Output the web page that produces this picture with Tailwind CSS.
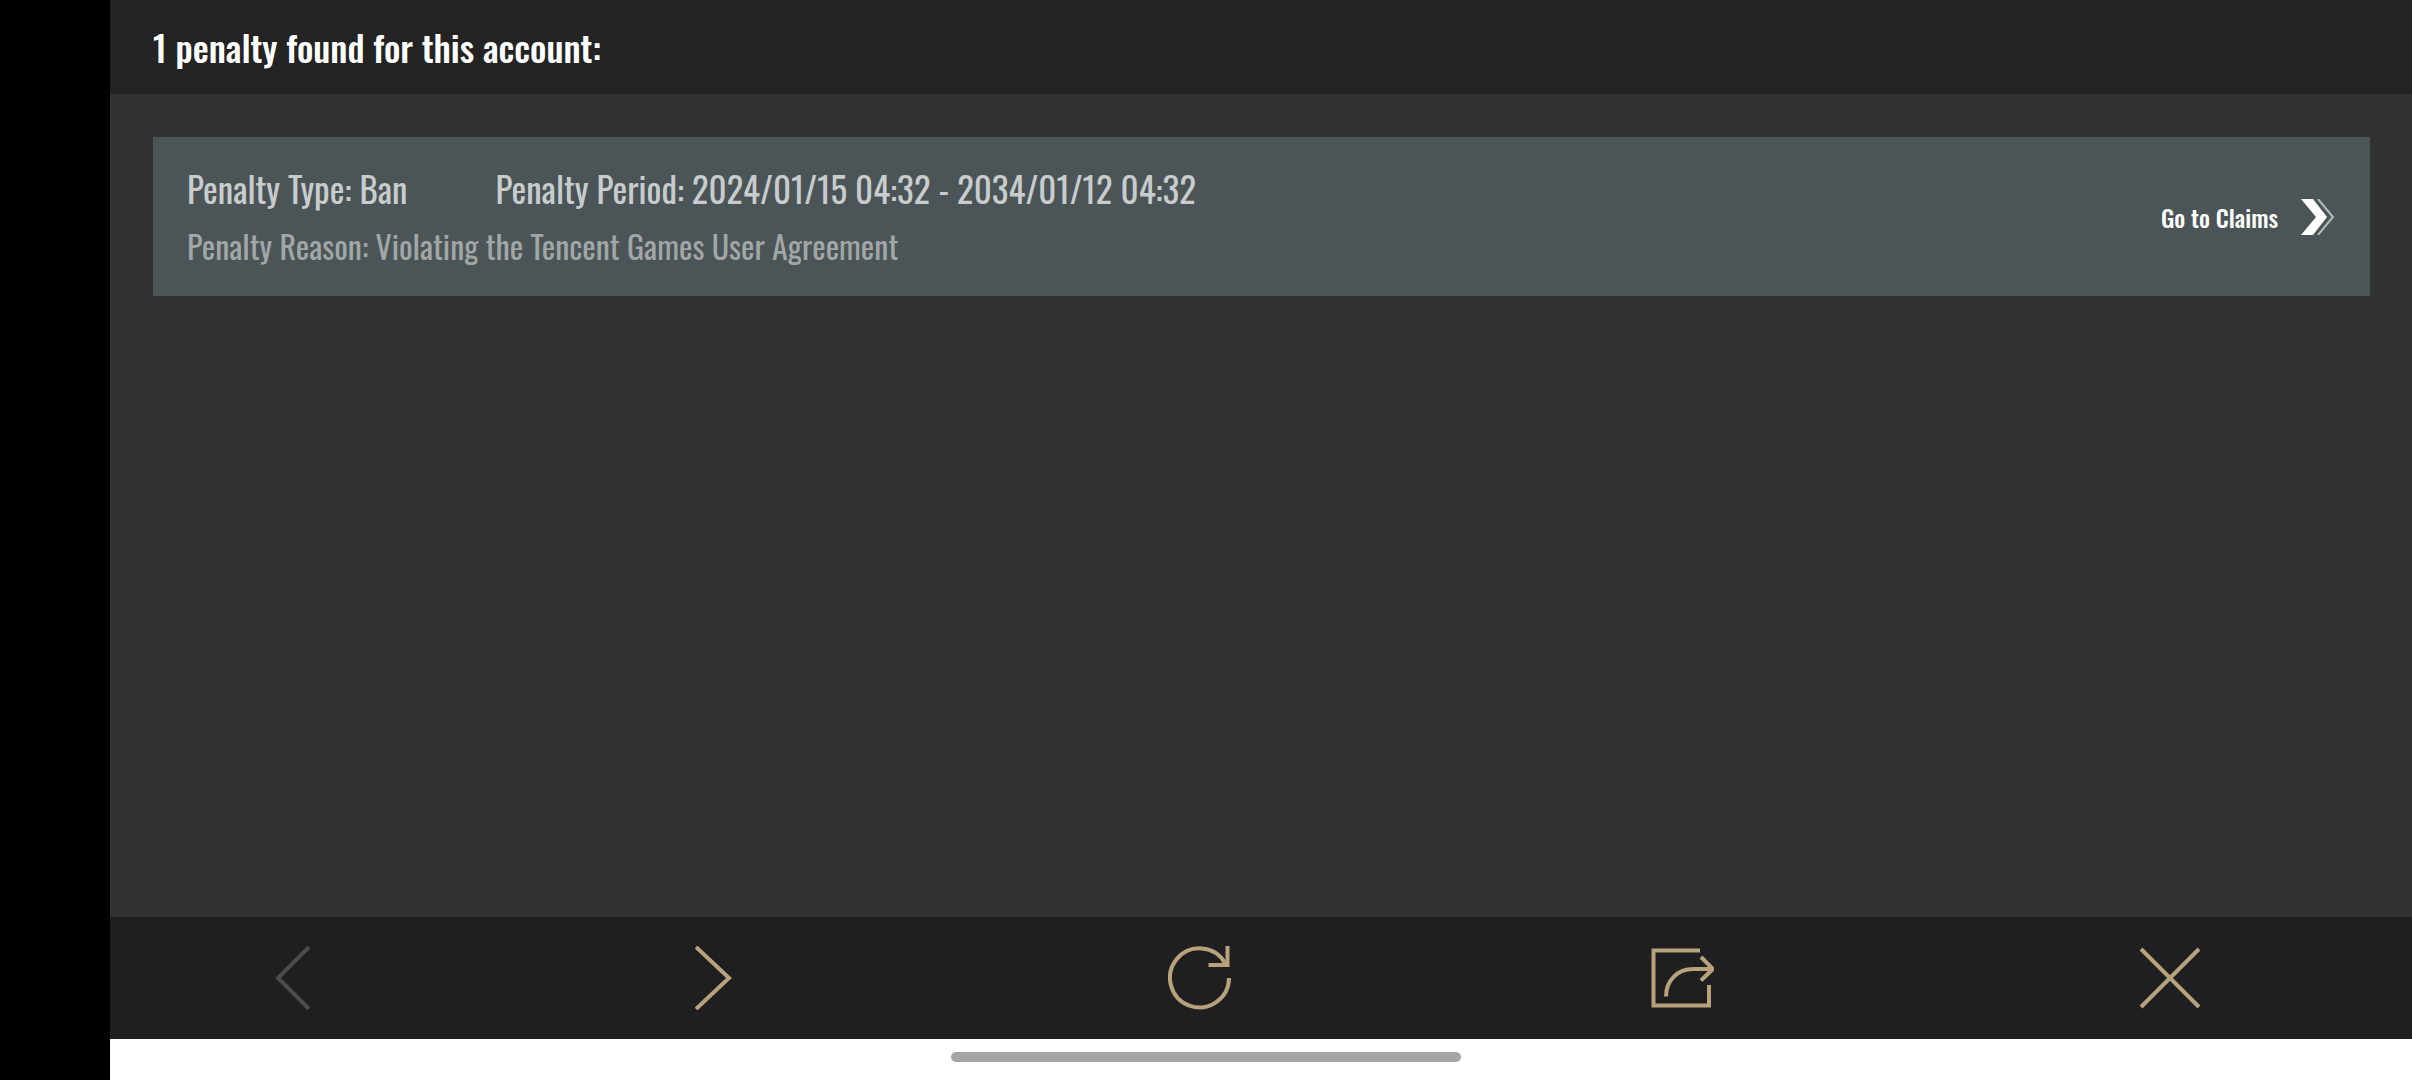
<!DOCTYPE html>
<html lang="en">
<head>
<meta charset="utf-8">
<meta name="viewport" content="width=device-width, initial-scale=1">
<title>Account penalties</title>
<script src="https://cdn.jsdelivr.net/npm/@tailwindcss/browser@4"></script>
</head>
<body class="relative flex min-h-screen bg-black font-['Oswald','Roboto_Condensed',sans-serif] font-medium">
  <div class="w-[110px] shrink-0"></div>
  <div class="flex min-w-0 flex-1 flex-col bg-[#323232]">
    <header class="flex h-[94px] items-center bg-[#232323] px-[43px]">
      <h1 class="text-[36px] leading-10 text-white">1 penalty found for this account:</h1>
    </header>

    <main class="flex-1 pl-[43px] pr-[42px] pt-[43px]">
      <section class="flex h-[159px] items-center justify-between bg-[#4b5456] px-[34px]">
        <div class="font-normal">
          <div class="flex gap-[88px] text-[35px] leading-[58px] text-[#c8cccd]">
            <p>Penalty Type: Ban</p>
            <p>Penalty Period: 2024/01/15 04:32 - 2034/01/12 04:32</p>
          </div>
          <p class="text-[32px] leading-[58px] text-[#a1a6a6]">Penalty Reason: Violating the Tencent Games User Agreement</p>
        </div>
        <a href="#claims" class="flex items-center gap-[22px] text-[24px] text-white">
          Go to Claims
          <svg class="h-9 w-9" viewBox="0 0 36 36" aria-hidden="true">
            <path d="M1 0H13L27 18L13 36H1L16 18Z" fill="#fff"/>
            <path d="M18 0L33 18L18 36" fill="none" stroke="#b4b9ba" stroke-width="2"/>
          </svg>
        </a>
      </section>
    </main>

    <nav class="grid h-[122px] grid-cols-[421fr_473fr_482fr_488fr_auto] items-center justify-items-start bg-[#1f1f21] pl-[164px] pr-[210px] text-[#b8a27b]" aria-label="Browser controls">
      <button type="button" aria-label="Back" disabled class="text-[#4b4b4b]">
        <svg class="h-16 w-10" viewBox="0 0 40 64" fill="none" stroke="currentColor" stroke-width="4"><path d="M35 1L4 32L35 63"/></svg>
      </button>
      <button type="button" aria-label="Forward">
        <svg class="h-16 w-10" viewBox="0 0 40 64" fill="none" stroke="currentColor" stroke-width="4"><path d="M1 1L34 32L1 63"/></svg>
      </button>
      <button type="button" aria-label="Reload">
        <svg class="h-16 w-16" viewBox="0 0 64 64" fill="none" stroke="currentColor" stroke-width="4"><path d="M61 32A29.500 29.500 0 1 1 57 17"/><path d="M59.500 0V19H40.500"/></svg>
      </button>
      <button type="button" aria-label="Share">
        <svg class="h-16 w-16" viewBox="0 0 64 64" fill="none" stroke="currentColor" stroke-width="4"><path d="M50 4.500H3.500V59.500H59V39"/><path d="M16 50.500C16 34 28 23 43 23H62"/><path d="M51 11L63 23L51 34.500"/></svg>
      </button>
      <button type="button" aria-label="Close">
        <svg class="h-16 w-16" viewBox="0 0 64 64" fill="none" stroke="currentColor" stroke-width="4"><path d="M3 3L61 61M61 3L3 61"/></svg>
      </button>
    </nav>
    <div class="h-[41px] bg-white"></div>
  </div>
  <div class="absolute bottom-[18px] left-1/2 h-[10px] w-[510px] -translate-x-1/2 rounded-full bg-[#a5a5a5]"></div>
</body>
</html>
